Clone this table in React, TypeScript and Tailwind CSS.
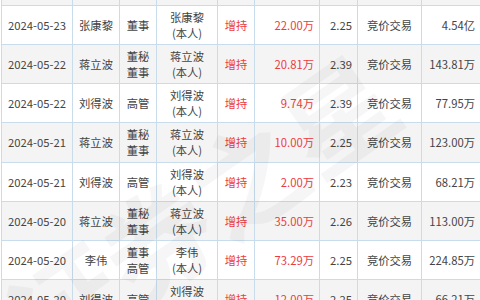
import React from "react";

type Row = {
    date: string
    name: string
    role: string[]
    who: string
    amount: string
    price: string
    way: string
    total: string
}

const rows: Row[] = [
    { date: "2024-05-23", name: "张康黎", role: ["董事"], who: "张康黎", amount: "22.00万", price: "2.25", way: "竞价交易", total: "4.54亿" },
    { date: "2024-05-22", name: "蒋立波", role: ["董秘", "董事"], who: "蒋立波", amount: "20.81万", price: "2.39", way: "竞价交易", total: "143.81万" },
    { date: "2024-05-22", name: "刘得波", role: ["高管"], who: "刘得波", amount: "9.74万", price: "2.39", way: "竞价交易", total: "77.95万" },
    { date: "2024-05-21", name: "蒋立波", role: ["董秘", "董事"], who: "蒋立波", amount: "10.00万", price: "2.25", way: "竞价交易", total: "123.00万" },
    { date: "2024-05-21", name: "刘得波", role: ["高管"], who: "刘得波", amount: "2.00万", price: "2.23", way: "竞价交易", total: "68.21万" },
    { date: "2024-05-20", name: "蒋立波", role: ["董秘", "董事"], who: "蒋立波", amount: "35.00万", price: "2.26", way: "竞价交易", total: "113.00万" },
    { date: "2024-05-20", name: "李伟", role: ["董事", "高管"], who: "李伟", amount: "73.29万", price: "2.25", way: "竞价交易", total: "224.85万" },
    { date: "2024-05-20", name: "刘得波", role: ["高管"], who: "刘得波", amount: "12.00万", price: "2.25", way: "竞价交易", total: "66.21万" },
]

const cell = "flex flex-col justify-center border-r border-[#c9dcec] leading-[16px]"

function TableRow({ row, gray }: { row?: Row, gray: boolean }) {
    return (
        <div className={`flex h-[39.15px] border-b border-[#c9dcec] ${gray ? "bg-[#f4f4f4]" : "bg-white"}`}>
            <div className={`${cell} w-[71px] items-center`}>{row?.date}</div>
            <div className={`${cell} w-[47px] items-center`}>{row?.name}</div>
            <div className={`${cell} w-[37px] items-center`}>
                {row?.role.map((r, i) => <span key={i}>{r}</span>)}
            </div>
            <div className={`${cell} w-[61px] items-center`}>
                {row && <span>{row.who}</span>}
                {row && <span>(本人)</span>}
            </div>
            <div className={`${cell} w-[37px] items-center text-[#ec3b40]`}>{row && "增持"}</div>
            <div className={`${cell} w-[65px] items-end pr-[5px] text-[#ec3b40]`}>{row?.amount}</div>
            <div className={`${cell} w-[38px] items-end pr-[5px]`}>{row?.price}</div>
            <div className={`${cell} w-[64px] items-center`}>{row?.way}</div>
            <div className={`${cell} w-[59px] items-end pr-[5px]`}>{row?.total}</div>
        </div>
    )
}

export default function App() {
    return (
        <div className="relative h-[300px] w-[480px] overflow-hidden bg-white text-[11.3px] text-[#444]" style={{ fontFamily: '"Noto Sans CJK SC", "Liberation Sans", sans-serif' }}>
            <div className="-mt-[33.15px] ml-px w-[481px] border-l border-[#c9dcec]">
                <TableRow gray={true} />
                {rows.map((row, idx) => (
                    <TableRow row={row} gray={idx % 2 === 1} key={idx} />
                ))}
            </div>
            {/* watermark */}
            <div className="pointer-events-none absolute left-[-20px] top-[150px] -rotate-[35deg] whitespace-nowrap text-[110px] font-bold leading-none text-black/[0.035]">
                证券之星
            </div>
        </div>
    )
}
